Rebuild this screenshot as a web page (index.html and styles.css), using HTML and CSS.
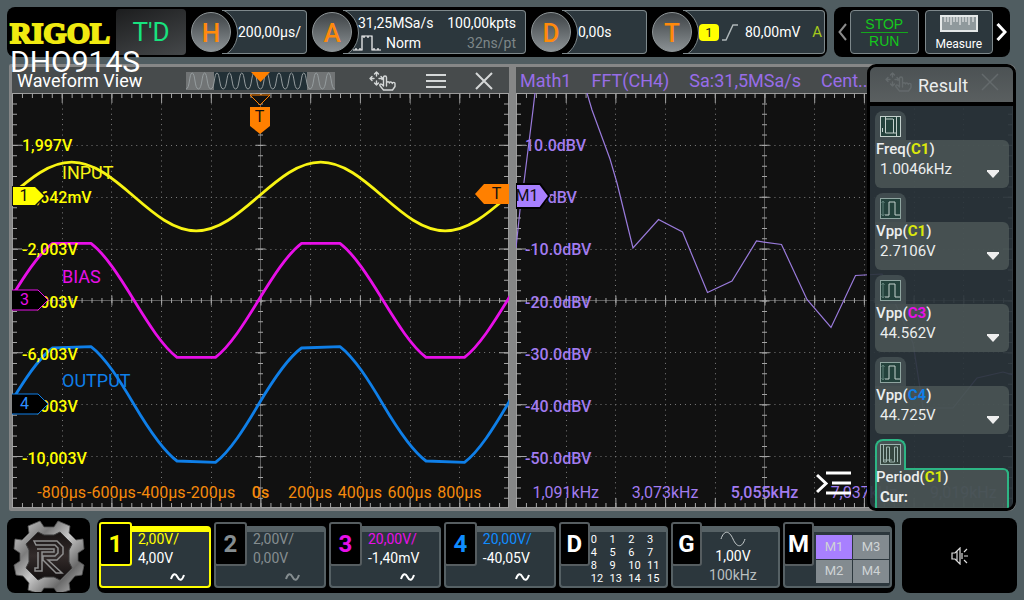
FILE: index.html
```html
<!DOCTYPE html>
<html lang="en">
<head>
<meta charset="utf-8">
<title>RIGOL DHO914S</title>
<link rel="stylesheet" href="styles.css">
</head>
<body>
<svg class="defs" aria-hidden="true">
  <defs>
    <g id="graticule">
      <rect class="frame" x="0.5" y="0.5" width="496" height="414"/>
      <path class="dots-h" d="M0 52.5H497M0 104.5H497M0 156.5H497M0 259.5H497M0 311.5H497M0 363.5H497"/>
      <path class="dots-v" d="M50.5 0V415M99.5 0V415M149.5 0V415M199.5 0V415M298.5 0V415M348.5 0V415M398.5 0V415M447.5 0V415"/>
      <path class="axis" d="M0 207.5H497M248.5 0V415"/>
      <path class="tick-h thin" d="M0 2.5H497M0 412.5H497M0 207.5H497"/>
      <path class="tick-v thin" d="M2.5 0V415M494.5 0V415M248.5 0V415"/>
      <path class="major-h" d="M0 5H497M0 410H497M0 207.5H497"/>
      <path class="major-v" d="M5 0V415M492 0V415M248.5 0V415"/>
    </g>
    <g id="move-hand" fill="none" stroke="currentColor" stroke-width="1.4" stroke-linejoin="round" stroke-linecap="round">
      <path d="M7.500 1v4M7.500 10v4M1 7.500h4M10 7.500h3M5.500 3l2-2 2 2M5.500 12l2 2 2-2M3 5.500l-2 2 2 2M12 5.500l2 2-1 1"/>
      <path d="M17.500 15V6.500a1.500 1.500 0 0 0-3 0V15l-1.500-1.500c-1.500-1-2.800 0-2 1.300l3.500 4.200h9l2.500-3.500v-3c0-1.500-2.500-1.500-2.700 0 0-2-2.800-2-2.900-.5 0-1.700-2.900-1.700-2.900 0"/>
    </g>
    <g id="pulse-vpp" fill="none" stroke="#8fa5a0">
      <rect x=".5" y=".5" width="20" height="20" fill="#24423c"/>
      <path stroke="#5f8078" d="M3 3v15M1.500 5L3 3l1.500 2M1.500 16L3 18l1.500-2"/>
      <path stroke="#c3d0cc" d="M5 17h4V4h6v13h5"/>
    </g>
    <g id="pulse-freq" fill="none" stroke="#c3d0cc">
      <rect x=".5" y=".5" width="20" height="20" fill="#24423c"/>
      <path d="M5.500 1v16H16M13.500 17V3M16.500 1v19M2.500 12v4M5 3h8"/>
    </g>
    <linearGradient id="steel" x1="0" y1="0" x2="1" y2="1">
      <stop offset="0" stop-color="#d8d8d8"/><stop offset=".3" stop-color="#7c7c7c"/>
      <stop offset=".5" stop-color="#c8c8c8"/><stop offset=".75" stop-color="#6a6a6a"/><stop offset="1" stop-color="#c4c4c4"/>
    </linearGradient>
    <linearGradient id="core" x1="0" y1="0" x2="0" y2="1">
      <stop offset="0" stop-color="#171313"/><stop offset=".5" stop-color="#332b2a"/><stop offset="1" stop-color="#120f0f"/>
    </linearGradient>
  </defs>
</svg>

<header class="top">
  <div class="bar status">
    <span class="brand">RIGOL</span>
    <span class="model">DHO914S</span>
    <button class="trig-state">T'D</button>
    <button class="module narrow"><span class="knob">H</span><span class="readout">200,00µs/</span></button>
    <button class="module acquire"><span class="knob">A</span>
      <span class="readout split">
        <span class="stack"><span>31,25MSa/s</span>
          <span class="mode"><svg width="28" height="17" viewBox="0 0 28 17" fill="none" stroke="#fff" stroke-width="1.200"><path d="M0 15h9V1h10v14h9M3 13v2M7 13v2M11 1v2M15 1v2M21 13v2M25 13v2"/></svg>Norm</span></span>
        <span class="stack right"><span>100,00kpts</span><span class="dim">32ns/pt</span></span>
      </span></button>
    <button class="module narrow"><span class="knob">D</span><span class="readout">0,00s</span></button>
    <button class="module trigger"><span class="knob">T</span>
      <span class="readout"><span class="source">1</span>
        <svg width="16" height="17" viewBox="0 0 16 17" fill="none" stroke="#aeb6b8" stroke-width="1.500"><path d="M0 16h4L11 1h5"/></svg>
        <span class="level">80,00mV</span><span class="sweep">A</span></span></button>
  </div>
  <div class="bar tools">
    <button class="chev prev" aria-label="Previous"><svg width="9" height="18" viewBox="0 0 9 18" fill="none" stroke="#8b8b8b" stroke-width="2"><path d="M8 1L1.500 9 8 17"/></svg></button>
    <button class="tool run"><span>STOP</span><span class="rule"></span><span>RUN</span></button>
    <button class="tool measure"><svg width="38" height="17" viewBox="0 0 38 17"><rect x="1" y="1" width="36" height="15" fill="#8f999c" stroke="#e4e8e8" stroke-width="2"/><path d="M5 2v5M8 2v5M11 2v8M14 2v5M17 2v5M20 2v8M23 2v5M26 2v5M29 2v8M33 2v5" stroke="#f5f5f5"/></svg><span>Measure</span></button>
    <button class="chev next" aria-label="Next"><svg width="11" height="18" viewBox="0 0 11 18" fill="none" stroke="#fff" stroke-width="3"><path d="M1.500 1L9 9l-7.500 8"/></svg></button>
  </div>
</header>

<main class="workspace">
  <section class="pane">
    <div class="pane-head">
      <h2 class="pane-title">Waveform View</h2>
      <svg class="overview" width="149" height="18" viewBox="0 0 149 18">
        <rect width="149" height="18" fill="#717475"/><rect x="28" width="93" height="18" fill="#223036"/>
        <path fill="none" stroke="#969d9f" d="M0 17C4 17 3 1 6.200 1S8.400 17 12.400 17 15.600 1 18.600 1 20.800 17 24.800 17 28 1 31 1 33.200 17 37.200 17 40.400 1 43.400 1 45.600 17 49.600 17 52.800 1 55.800 1 58 17 62 17 65.200 1 68.200 1 70.400 17 74.400 17 77.600 1 80.600 1 82.800 17 86.800 17 90 1 93 1 95.200 17 99.200 17 102.400 1 105.400 1 107.600 17 111.600 17 114.800 1 117.800 1 120 17 124 17 127.200 1 130.200 1 132.400 17 136.400 17 139.600 1 142.600 1 144.800 17 148.800 17"/>
        <path fill="#ff8000" d="M65 0h19l-9.500 10z"/>
      </svg>
      <div class="pane-tools">
        <button aria-label="Drag"><svg width="28" height="20" viewBox="0 0 28 20"><use href="#move-hand"/></svg></button>
        <button aria-label="Menu"><svg width="20" height="14" viewBox="0 0 20 14" stroke="currentColor" stroke-width="2"><path d="M0 1h20M0 7h20M0 13h20"/></svg></button>
        <button aria-label="Close"><svg width="18" height="18" viewBox="0 0 18 18" stroke="currentColor" stroke-width="2"><path d="M1 1l16 16M17 1L1 17"/></svg></button>
      </div>
    </div>
    <div class="plot">
      <svg class="canvas" viewBox="0 0 497 415" preserveAspectRatio="none">
        <use href="#graticule"/>
        <g fill="none" stroke-width="2.800" stroke-linejoin="round">
          <path stroke="#f8f413" d="M-2.500 103.500c20.300-17.600 39.700-34.300 62.200-34.300s42 16.700 62.300 34.300 39.700 34.300 62.200 34.300 42-16.700 62.300-34.300 39.700-34.300 62.200-34.300 42 16.700 62.300 34.300 39.700 34.300 62.200 34.300 42-16.700 62.300-34.300"/>
          <path stroke="#e80fe8" d="M-2.500 207.300c14.300-23.300 28.700-46.100 43-57h38.500c14.300 10.900 28.700 33.700 43 57s28.700 46.100 43 57h38.500c14.300-10.900 28.700-33.700 43-57s28.700-46.100 43-57h38.500c14.300 10.900 28.700 33.700 43 57s28.700 46.100 43 57h38.500c14.300-10.900 28.700-33.700 43-57l3-5"/>
          <path stroke="#0f7fe8" d="M-2.500 311.500c14.300-23.300 28.700-46.100 43-56.500l38.500-1.400c14.300 10.900 28.700 33.700 43 57.900s28.700 46.100 43 56.500l38.500 1.400c14.300-10.900 28.700-33.700 43-57.900s28.700-46.100 43-56.500l38.500-1.400c14.300 10.900 28.700 33.700 43 57.900s28.700 46.100 43 56.500l38.500 1.400c14.300-10.900 28.700-33.700 43-57.900l3-5"/>
        </g>
      </svg>
      <div class="y-scale volts"><span>1,997V</span><span>-2,642mV</span><span>-2,003V</span><span>-4,003V</span><span>-6,003V</span><span>-8,003V</span><span>-10,003V</span></div>
      <div class="x-scale time"><span>-800µs</span><span>-600µs</span><span>-400µs</span><span>-200µs</span><span class="mid">0s</span><span>200µs</span><span>400µs</span><span>600µs</span><span>800µs</span></div>
      <span class="trace-name input">INPUT</span>
      <span class="trace-name bias">BIAS</span>
      <span class="trace-name output">OUTPUT</span>
      <div class="marker m-one"><svg width="34" height="20" viewBox="0 0 34 20"><path d="M0 0h24l10 10-10 10H0z" fill="#111"/><path d="M1 1h22l9 9-9 9H1z" fill="#ff0"/></svg><span>1</span></div>
      <div class="marker m-three"><svg width="37" height="22" viewBox="0 0 37 22"><path d="M0 1h26l10 10-10 10H0" fill="#000" stroke="#e80fe8"/></svg><span>3</span></div>
      <div class="marker m-four"><svg width="37" height="22" viewBox="0 0 37 22"><path d="M0 1h26l10 10-10 10H0" fill="#000" stroke="#0f7fe8"/></svg><span>4</span></div>
      <div class="marker m-pos"><svg width="22" height="42" viewBox="0 0 22 42"><path d="M1 2h20L11 12z" fill="#111" stroke="#ff8000"/><path d="M1 14h20v19l-10 8-10-8z" fill="#ff8000"/></svg><span>T</span></div>
      <div class="marker m-level"><svg width="34" height="20" viewBox="0 0 34 20"><path d="M34 0H9L0 10l9 10h25z" fill="#ff8000"/></svg><span>T</span></div>
    </div>
  </section>

  <section class="pane">
    <div class="pane-head math"><span>Math1</span><span>FFT(CH4)</span><span>Sa:31,5MSa/s</span><span>Cent...</span></div>
    <div class="plot">
      <svg class="canvas" viewBox="0 0 497 415" preserveAspectRatio="none">
        <use href="#graticule"/>
        <path fill="none" stroke="#9a7bdc" stroke-width="1.200" d="M0 155l4-38 4-28 9-72 2-17M71 0l5 17 18 49 7 24 16 65 25.500-28.500 24 12.500 25 60.500 24.500-11.500L240.500 148l25 3.500 25.500 55 24 28L339.500 182.500 366 181l31 69 10 65h30l24-30 26-6 10 3"/>
      </svg>
      <div class="y-scale db"><span>10.0dBV</span><span>0.0dBV</span><span>-10.0dBV</span><span>-20.0dBV</span><span>-30.0dBV</span><span>-40.0dBV</span><span>-50.0dBV</span></div>
      <div class="x-scale freq"><span>1,091kHz</span><span>3,073kHz</span><span class="mid">5,055kHz</span><span>7,037kHz</span><span>9,019kHz</span></div>
      <div class="marker m-math"><svg width="34" height="26" viewBox="0 0 34 26"><path d="M0 1h24l9 12-9 12H0z" fill="#a880ff" stroke="#000" stroke-width="2"/></svg><span>M1</span></div>
      <button class="drawer" aria-label="Collapse results"><svg width="36" height="25" viewBox="0 0 36 25" fill="none" stroke="#fff" stroke-width="3"><path d="M1 4l9 8.500L1 21M10 2h25M16 12h19M10 22h25"/></svg></button>
    </div>
  </section>

  <aside class="results">
    <h2 class="results-head"><svg class="ghost" width="28" height="20" viewBox="0 0 28 20"><use href="#move-hand"/></svg><span class="results-title">Result</span><svg class="ghost" width="18" height="18" viewBox="0 0 18 18" stroke="currentColor" stroke-width="1.500"><path d="M1 1l16 16M17 1L1 17"/></svg></h2>
    <div class="results-list">
      <div class="item"><div class="tab"><svg width="21" height="21" viewBox="0 0 21 21"><use href="#pulse-freq"/></svg></div>
        <div class="card"><div class="name">Freq(<b class="c1">C1</b>)</div><div class="value">1.0046kHz</div><button class="more" aria-label="Freq details"></button></div></div>
      <div class="item"><div class="tab"><svg width="21" height="21" viewBox="0 0 21 21"><use href="#pulse-vpp"/></svg></div>
        <div class="card"><div class="name">Vpp(<b class="c1">C1</b>)</div><div class="value">2.7106V</div><button class="more" aria-label="Vpp C1 details"></button></div></div>
      <div class="item"><div class="tab"><svg width="21" height="21" viewBox="0 0 21 21"><use href="#pulse-vpp"/></svg></div>
        <div class="card"><div class="name">Vpp(<b class="c3">C3</b>)</div><div class="value">44.562V</div><button class="more" aria-label="Vpp C3 details"></button></div></div>
      <div class="item"><div class="tab"><svg width="21" height="21" viewBox="0 0 21 21"><use href="#pulse-vpp"/></svg></div>
        <div class="card"><div class="name">Vpp(<b class="c4">C4</b>)</div><div class="value">44.725V</div><button class="more" aria-label="Vpp C4 details"></button></div></div>
      <div class="item selected"><div class="tab"><svg width="21" height="21" viewBox="0 0 21 21" fill="none" stroke="#9fb5b0"><rect x=".5" y=".5" width="20" height="20" fill="#35463f"/><path d="M3.500 1v17M6.500 18V3h3v15h5V3h3v15M3.500 18h3M3 16h9"/></svg></div>
        <div class="card"><div class="name">Period(<b class="c1">C1</b>)</div><div class="value strong">Cur:</div></div></div>
    </div>
  </aside>
</main>

<footer class="bottom">
  <button class="bar logo" aria-label="Main menu">
    <svg width="72" height="72" viewBox="0 0 72 72">
      <path fill="url(#steel)" stroke="#555" stroke-width=".8" d="M27 1l4 6h10l4-6 12 5-1 7 7 7 7-1 1 10-6 4v8l6 4-2 10-7 1-6 7 1 7-12 4-4-6H31l-4 6-12-4 1-7-6-7-7-1-2-10 6-4v-8l-6-4 1-10 7 1 7-7-1-7z"/>
      <path fill="url(#core)" stroke="#3a3a3a" d="M25 12l6 3h10l6-3 12 12-3 6v12l3 6-12 12-6-3H31l-6 3-12-12 3-6V30l-3-6z"/>
      <g fill="none" stroke="#8f8f8f" stroke-width="1.500"><path d="M21 21h23l6 6v7l-6 6h-9l14 13h-6L30 40v-4h12l3-3v-5l-3-3H23zM24 29h17v3H29v19h-7v-3h3V32"/></g>
    </svg>
  </button>
  <div class="bar channels">
    <button class="ch ch1 active"><span class="num">1</span><span class="vals"><span class="scale">2,00V/</span><span>4,00V</span><svg class="ac" width="15" height="8" viewBox="0 0 15 8"><path d="M1 6c2-6 4.500-6 6.500-2S12 8 14 2"/></svg></span></button>
    <button class="ch ch2"><span class="num">2</span><span class="vals"><span class="scale">2,00V/</span><span>0,00V</span><svg class="ac" width="15" height="8" viewBox="0 0 15 8"><path d="M1 6c2-6 4.500-6 6.500-2S12 8 14 2"/></svg></span></button>
    <button class="ch ch3"><span class="num">3</span><span class="vals"><span class="scale">20,00V/</span><span>-1,40mV</span><svg class="ac" width="15" height="8" viewBox="0 0 15 8"><path d="M1 6c2-6 4.500-6 6.500-2S12 8 14 2"/></svg></span></button>
    <button class="ch ch4"><span class="num">4</span><span class="vals"><span class="scale">20,00V/</span><span>-40,05V</span><svg class="ac" width="15" height="8" viewBox="0 0 15 8"><path d="M1 6c2-6 4.500-6 6.500-2S12 8 14 2"/></svg></span></button>
    <button class="ch digital"><span class="num">D</span><span class="bits"><span>0</span><span>1</span><span>2</span><span>3</span><span>4</span><span>5</span><span>6</span><span>7</span><span>8</span><span>9</span><span>10</span><span>11</span><span>12</span><span>13</span><span>14</span><span>15</span></span></button>
    <button class="ch gen"><span class="num">G</span><span class="gen-vals"><svg width="26" height="16" viewBox="0 0 26 16" fill="none" stroke="#c5cbcc"><path d="M1 8C4-1 9-1 13 8s9 9 12 0"/></svg><span>1,00V</span><span class="khz">100kHz</span></span></button>
    <div class="ch maths"><span class="num">M</span><span class="cells"><button class="on">M1</button><button>M3</button><button>M2</button><button>M4</button></span></div>
  </div>
  <button class="bar sound" aria-label="Sound"><svg width="18" height="18" viewBox="0 0 18 18" fill="none" stroke="#ddd" stroke-width="1.200"><path d="M1 6h3l5-5v16l-5-5H1zM6 4v10M11 6v6M13 5l3-3M13 9h4M13 13l3 3"/></svg></button>
</footer>
</body>
</html>
```
FILE: styles.css
```css
* { box-sizing: border-box; }
html { height: 100%; }
body {
  margin: 0;
  min-height: 100%;
  padding: 7px;
  display: grid;
  grid-template-rows: 50px 1fr 75px;
  gap: 7px;
  background: #505d61;
  color: #fff;
  font-family: Roboto, "Liberation Sans", sans-serif;
  font-size: 14px;
  line-height: 20px;
}
button { padding: 0; border: 0; background: none; color: inherit; font: inherit; }
svg { display: block; flex: none; }
h2 { margin: 0; font-weight: 400; }
.defs { position: absolute; width: 0; height: 0; }
.bar { background: #000; border-radius: 8px; }

/* top bar */
.top { display: flex; gap: 7px; margin-right: 7px; }
.status { flex: 1; position: relative; display: flex; padding: 3px 2px 3px 3px; }
.brand {
  width: 106px;
  color: #f0ea10;
  font: bold 30px/46px "Liberation Serif", serif;
  -webkit-text-stroke: 2px #f0ea10;
}
.model { position: absolute; left: 3px; top: 38px; font-size: 30px; line-height: 34px; z-index: 3; }
.trig-state {
  width: 70px;
  margin: -1px 5px -1px 0;
  border-radius: 4px;
  background: linear-gradient(160deg, #1c1d1e, #45484a);
  color: #18e27e;
  font-size: 26px;
}
.module { position: relative; display: flex; align-items: center; margin-right: 5px; text-align: left; }
.module:last-child { margin-right: 0; }
.narrow { flex: 116; }
.acquire { flex: 214; }
.trigger { flex: 173; }
.knob {
  position: relative;
  z-index: 1;
  flex: none;
  width: 40px;
  height: 40px;
  border-radius: 50%;
  border: 1px solid #8f9698;
  background: linear-gradient(#3e4346, #8b9194);
  color: #ff8a0c;
  font-size: 26px;
  font-weight: 500;
  line-height: 40px;
  text-align: center;
}
.readout {
  position: relative;
  overflow: hidden;
  flex: 1;
  height: 44px;
  margin-left: -9px;
  padding-left: 16px;
  display: flex;
  align-items: center;
  border: 1px solid #7e888b;
  border-left: 0;
  border-radius: 0 4px 4px 0;
  background: #2c373d;
  white-space: nowrap;
}
.readout::before {
  content: "";
  position: absolute;
  left: -36px;
  top: -4px;
  width: 50px;
  height: 50px;
  border-radius: 50%;
  border: 1px solid #7e888b;
  background: #000;
}
.split { justify-content: space-between; padding: 2px 9px 0 15px; }
.stack { position: relative; display: flex; flex-direction: column; }
.stack.right { align-items: flex-end; }
.mode { display: flex; align-items: center; gap: 5px; margin-left: -5px; }
.dim { color: #7d8688; }
.trigger .readout { gap: 3px; padding: 0 2px 0 16px; }
.source { position: relative; width: 20px; height: 17px; border-radius: 4px; background: #ff0; color: #222; font-size: 13px; line-height: 17px; text-align: center; }
.level { margin-left: 4px; flex: 1; }
.sweep { color: #a4c81c; font-size: 15px; }
.tools { width: 176px; display: flex; align-items: center; gap: 6px; padding: 3px 3px 3px 4px; }
.prev { margin-right: -3px; }
.next { margin-left: -3px; }
.tool { flex: 1; height: 44px; border: 1px solid #7e888b; border-radius: 4px; background: #2c373d; display: flex; flex-direction: column; align-items: center; justify-content: center; }
.run { color: #14c81c; font: 14px/16px "Liberation Sans", sans-serif; }
.rule { align-self: stretch; height: 1px; margin: 0 10px; background: #14a81c; }
.measure { padding-top: 3px; font-size: 12px; line-height: 16px; gap: 4px; }

/* workspace */
.workspace { position: relative; margin: 0 1px 0 2px; padding: 3px; display: grid; grid-template-columns: 1fr 1fr; gap: 7px; background: #868787; border-radius: 2px 8px 8px 2px; }
.pane { display: grid; grid-template-rows: 26px 1fr; min-width: 0; }
.pane-head { display: flex; align-items: center; padding: 2px 16px 0 5px; background: #474b4c; color: #d5d8d8; }
.pane-title { width: 169px; color: #fff; font-size: 18px; line-height: 24px; white-space: nowrap; }
.pane-tools { flex: 1; display: flex; justify-content: flex-end; align-items: center; gap: 29px; }
.math { gap: 20px; padding: 2px 4px 0; color: #986de8; font-size: 18px; white-space: nowrap; overflow: hidden; }
.plot { position: relative; overflow: hidden; background: #111; }
.canvas { position: absolute; width: 100%; height: 100%; }

/* graticule */
.frame, .axis, .dots-h, .dots-v { fill: none; stroke: #9a9a9a; }
.axis { stroke: #5c5c5c; }
.dots-h { stroke: #7c7c7c; stroke-dasharray: 1 3.97; }
.dots-v { stroke: #7c7c7c; stroke-dasharray: 1 4.19; }
.tick-h, .tick-v, .major-h, .major-v { fill: none; stroke: #a4a4a4; }
.thin { stroke-width: 5; }
.tick-h { stroke-dasharray: 1 8.94; }
.tick-v { stroke-dasharray: 1 9.38; }
.major-h, .major-v { stroke-width: 10; }
.major-h { stroke-dasharray: 1 48.7; }
.major-v { stroke-dasharray: 1 50.87; }

/* scales: each label is centred on its grid line */
.y-scale { position: absolute; top: 6.5%; bottom: 5.5%; left: 10px; display: flex; flex-direction: column; font-size: 16px; font-weight: 500; }
.y-scale span { flex: 1; display: flex; align-items: center; }
.y-scale.db { left: 9px; }
.volts { color: #ff0; }
.db, .freq { color: #a27cf0; }
.x-scale { position: absolute; bottom: 5px; display: flex; font-size: 16px; }
.x-scale span { flex: 1 1 0; min-width: 0; display: flex; justify-content: center; }
.time { left: 5%; right: 5%; color: #f58a0c; }
.freq { left: 0; right: 0; }
.mid { font-weight: 500; }

/* trace names and position markers */
.trace-name { position: absolute; left: 50px; font-size: 18px; }
.input { top: 70px; color: #f8f413; }
.bias { top: 174px; color: #e80fe8; }
.output { top: 278px; color: #0f7fe8; }
.marker { position: absolute; font-size: 16px; }
.marker span { position: absolute; inset: 0; display: flex; align-items: center; justify-content: center; }
.m-one { left: 0; top: 93px; color: #111; }
.m-one span { right: 10px; }
.m-three span, .m-four span { right: 12px; }
.m-three { left: 0; top: 196px; color: #e80fe8; }
.m-four { left: 0; top: 300px; color: #2f8fff; }
.m-pos { left: 50%; top: 0; margin-left: -12px; color: #111; }
.m-pos span { top: 6px; }
.m-level { right: 0; top: 91px; color: #111; }
.m-level span { left: 9px; }
.m-math { left: 0; top: 90px; color: #111; }
.m-math span { right: 12px; }
.drawer { position: absolute; left: 300px; bottom: 12px; }

/* results */
.results { position: absolute; top: 0; right: 0; bottom: 0; width: 149px; display: flex; flex-direction: column; border: 3px solid #000; border-radius: 9px; background: rgba(42, 52, 59, .92); overflow: hidden; color: #eceeee; }
.results-head { height: 39px; display: flex; align-items: center; justify-content: space-between; padding: 2px 14px 0 15px; border-bottom: 4px solid #000; background: linear-gradient(#4c5254, #5a5f60); font-size: 18px; }
.results-title { flex: 1; padding-left: 5px; }
.ghost { margin-top: -8px; color: #646a6c; }
.results-list { flex: 1 1 0; min-height: 0; overflow: hidden; padding: 5px 4px 0 5px; display: flex; flex-direction: column; gap: 5px; }
.item { flex: none; }
.tab { width: 31px; height: 29px; padding: 5px; border-radius: 8px 8px 0 0; background: #414c4f; }
.card { position: relative; height: 48px; padding: 0 5px; border-radius: 0 6px 6px 6px; background: rgba(90, 102, 99, .6); }
.name { margin: 0 -4px; font-size: 15px; font-weight: 500; line-height: 18px; }
.name b { font-weight: 700; }
.value { font-size: 15px; line-height: 22px; }
.strong { font-weight: 700; }
.c1 { color: #dbe80c; }
.c3 { color: #e80fe8; }
.c4 { color: #0f7fe8; }
.more { position: absolute; right: 10px; top: 30px; width: 12px; height: 8px; background: #eee; clip-path: polygon(0 0, 100% 0, 100% 20%, 50% 100%, 0 20%); }
.selected .tab { position: relative; z-index: 1; height: 31px; margin-bottom: -2px; padding: 3px; border: 2px solid #2db584; border-bottom: 0; background: #475254; }
.selected .card { border: 2px solid #2db584; padding: 0 3px; z-index: 1; }
.selected .card { border-top-color: transparent; background-clip: padding-box; }
.selected .card::before { content: ""; position: absolute; left: 27px; right: -2px; top: -2px; height: 8px; border-top: 2px solid #2db584; border-right: 2px solid #2db584; border-radius: 0 6px 0 0; }
.selected .name { margin-top: -2px; }

/* bottom bar */
.bottom { display: flex; gap: 7px; }
.logo { width: 83px; display: flex; align-items: center; justify-content: center; }
.channels { flex: 1; display: flex; gap: 3px; padding: 4px 3px 5px 2px; }
.ch { position: relative; flex: 112; display: flex; margin-top: 4px; border: 2px solid #566165; border-top-width: 6px; border-radius: 4px; background: #2c373d; text-align: left; }
.num { flex: none; width: 33px; height: 44px; margin: -10px 0 0 -2px; display: flex; align-items: center; justify-content: center; border: 2px solid #565d60; border-radius: 3px; background: #000; font-size: 24px; font-weight: 700; }
.vals { margin-top: -2px; padding: 0 0 0 6px; display: flex; flex: 1; flex-direction: column; line-height: 19px; }
.ac { fill: none; stroke: currentColor; stroke-width: 2; margin: 5px 24px 0 auto; }
.active, .active .num { border-color: #ff0; }
.ch1 .scale, .ch1 .num { color: #ff0; }
.ch2 { color: #858d90; }
.ch3 .scale, .ch3 .num { color: #e80fe8; }
.ch4 .scale, .ch4 .num { color: #108cff; }
.digital, .gen, .maths { flex: 109; }
.digital .num, .gen .num, .maths .num { width: 31px; }
.bits { flex: 1; display: grid; grid-template-columns: repeat(4, 1fr); align-content: center; padding-left: 1px; font-size: 11px; line-height: 13px; }
.gen-vals { flex: 1; display: flex; flex-direction: column; align-items: center; margin: -1px 14px 0 0; line-height: 19px; }
.khz { color: #b9bfc0; }
.cells { flex: 1; display: grid; grid-template-columns: 1fr 1fr; grid-template-rows: 1fr 1fr; gap: 1px; margin: 3px 1px 3px 2px; }
.cells button { background: #838b90; color: #cfd3d5; font-size: 13px; }
.cells .on { background: #a880ff; }
.sound { width: 115px; display: flex; align-items: center; justify-content: center; }
```
